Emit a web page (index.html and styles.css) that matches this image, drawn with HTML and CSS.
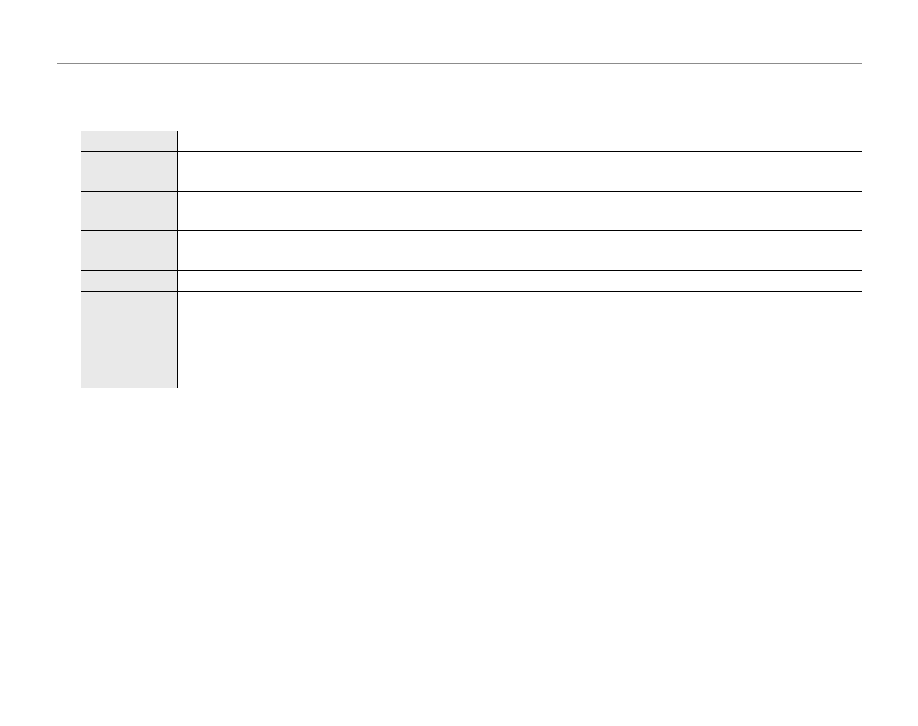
FILE: index.html
```html
<!DOCTYPE html>
<html>
<head>
<meta charset="utf-8">
<link rel="stylesheet" href="styles.css">
</head>
<body>
<div class="page">
  <div class="rule"></div>
  <div class="table">
    <div class="row h20 first"><div class="label"></div><div class="value"></div></div>
    <div class="row h39"><div class="label"></div><div class="value"></div></div>
    <div class="row h38"><div class="label"></div><div class="value"></div></div>
    <div class="row h39"><div class="label"></div><div class="value"></div></div>
    <div class="row h20"><div class="label"></div><div class="value"></div></div>
    <div class="row h96"><div class="label"></div><div class="value"></div></div>
  </div>
</div>
</body>
</html>
```
FILE: styles.css
```css
html, body {
  margin: 0;
  padding: 0;
  background: #ffffff;
  font-family: "Liberation Sans", Arial, sans-serif;
}
.page {
  width: 918px;
  height: 726px;
  padding-top: 63px;
  box-sizing: border-box;
}
.rule {
  margin-left: 57px;
  width: 805px;
  height: 1px;
  background: #8c8c8c;
}
.table {
  margin-top: 67px;
  margin-left: 81px;
  width: 781px;
  display: flex;
  flex-direction: column;
}
.row {
  display: flex;
  border-top: 1px solid #000;
}
.row.first {
  border-top: none;
}
.label {
  width: 96px;
  background: #e9e9e9;
}
.value {
  flex: 1;
  border-left: 1px solid #000;
}
.h20 { height: 20px; }
.h38 { height: 38px; }
.h39 { height: 39px; }
.h96 { height: 96px; }
```
